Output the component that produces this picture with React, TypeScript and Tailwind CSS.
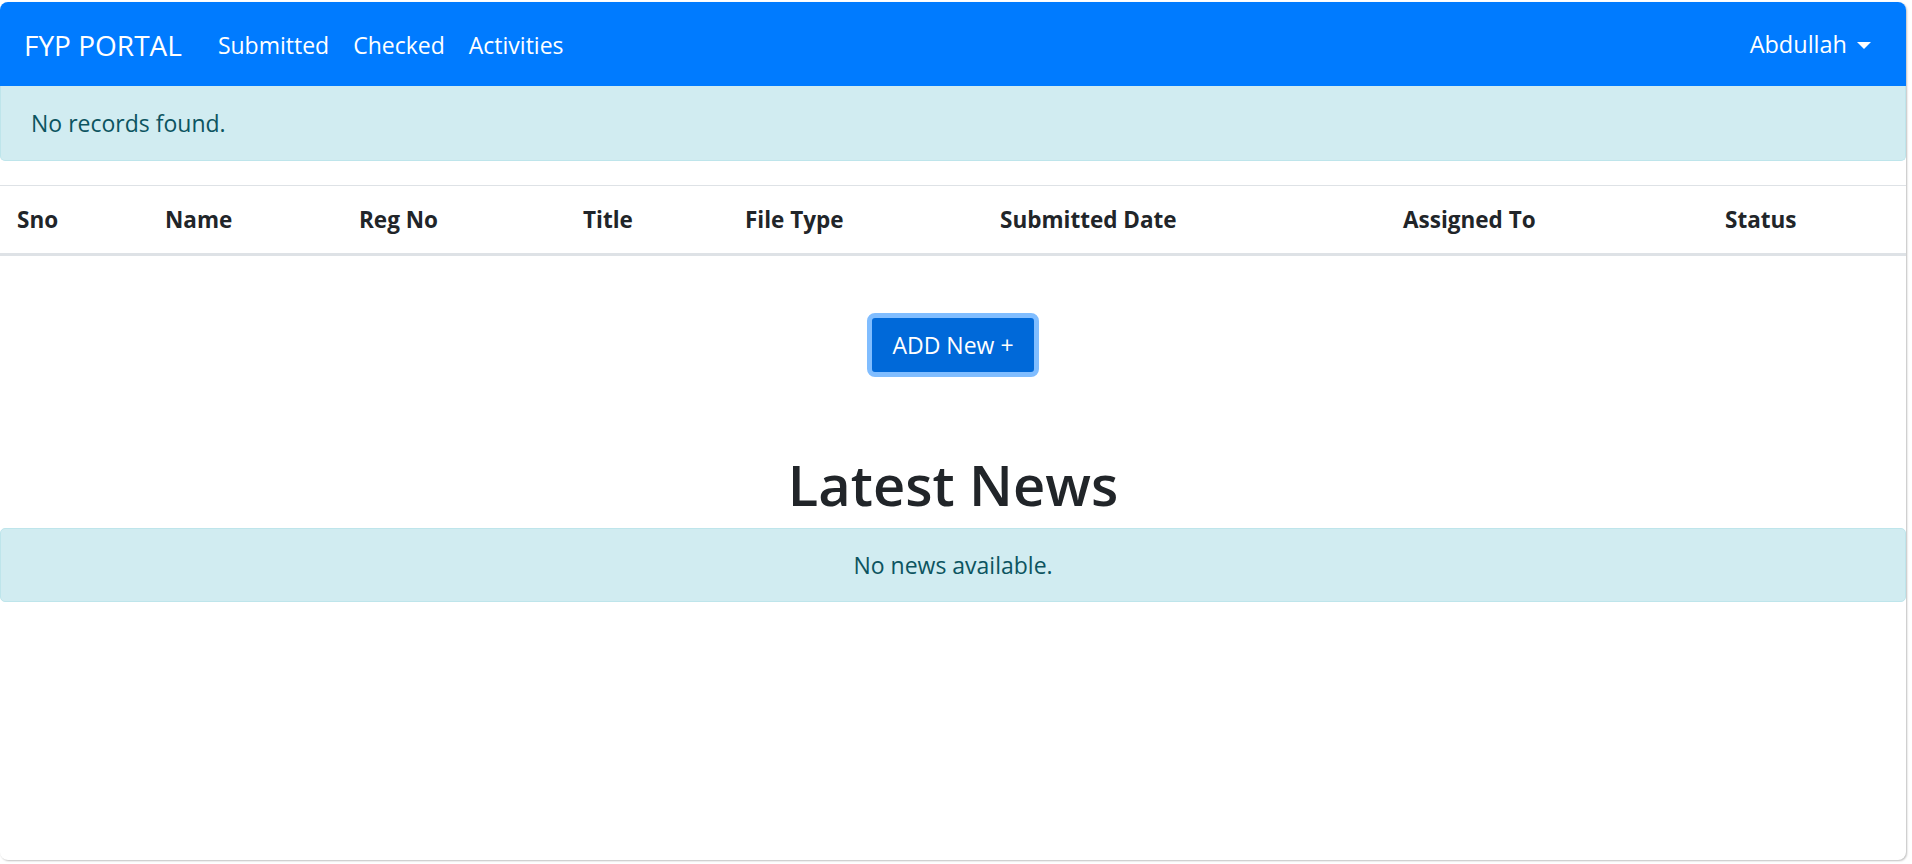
import { FC } from "react";

const columns = [
  { label: "Sno", w: "w-[148px]" },
  { label: "Name", w: "w-[194px]" },
  { label: "Reg No", w: "w-[224px]" },
  { label: "Title", w: "w-[162px]" },
  { label: "File Type", w: "w-[255px]" },
  { label: "Submitted Date", w: "w-[403px]" },
  { label: "Assigned To", w: "w-[322px]" },
  { label: "Status", w: "w-[198px]" },
];

const Navbar: FC = () => (
  <nav className="flex h-[84px] items-center justify-between bg-[#007bff] px-[24px] pt-[2px] text-white">
    <div className="flex items-center">
      <span className="mr-[36px] text-[28px] leading-none">FYP PORTAL</span>
      <div className="flex items-center gap-[24px] text-[23px]">
        <a>Submitted</a>
        <a>Checked</a>
        <a>Activities</a>
      </div>
    </div>
    <div className="mr-[11px] flex items-center gap-[10px] text-[23.5px]">
      <span>Abdullah</span>
      <span className="h-0 w-0 border-x-[7px] border-t-[7px] border-x-transparent border-t-white" />
    </div>
  </nav>
);

export default function App() {
  return (
    <div
      className="h-[864px] w-[1912px] overflow-hidden bg-white"
      style={{ fontFamily: '"Open Sans", "Noto Sans", sans-serif' }}
    >
      <div className="mt-[2px] h-[858px] w-[1906px] overflow-hidden rounded-[8px] bg-white shadow-[1px_1px_2px_rgba(0,0,0,0.25)]">
        <Navbar />

        <div className="flex h-[75px] items-center rounded-b-[5px] border border-t-0 border-[#bee5eb] bg-[#d1ecf1] px-[30px] pt-[1px] text-[23px] text-[#0c5460]">
          No records found.
        </div>

        <table className="mt-[24px] table-fixed border-collapse text-[22.5px] text-[#212529]">
          <thead>
            <tr className="border-t border-b-[3px] border-t-[#dee2e6] border-b-[#dee2e6]">
              {columns.map((c) => (
                <th
                  key={c.label}
                  className={`${c.w} h-[69px] px-[17px] pt-[1px] text-left font-bold`}
                >
                  {c.label}
                </th>
              ))}
            </tr>
          </thead>
        </table>

        <div className="mt-[57px] flex justify-center">
          <button className="h-[64px] rounded-[8px] border-[5px] border-[#80bdff] bg-[#0069d9] px-[20px] text-[23px] text-white">
            ADD New +
          </button>
        </div>

        <h1 className="mt-[71px] text-center text-[56px] leading-[72px] font-semibold text-[#212529]">
          Latest News
        </h1>

        <div className="mt-[8px] flex h-[74px] items-center justify-center rounded-[5px] border border-[#bee5eb] bg-[#d1ecf1] text-[23px] text-[#0c5460]">
          No news available.
        </div>
      </div>
    </div>
  );
}
